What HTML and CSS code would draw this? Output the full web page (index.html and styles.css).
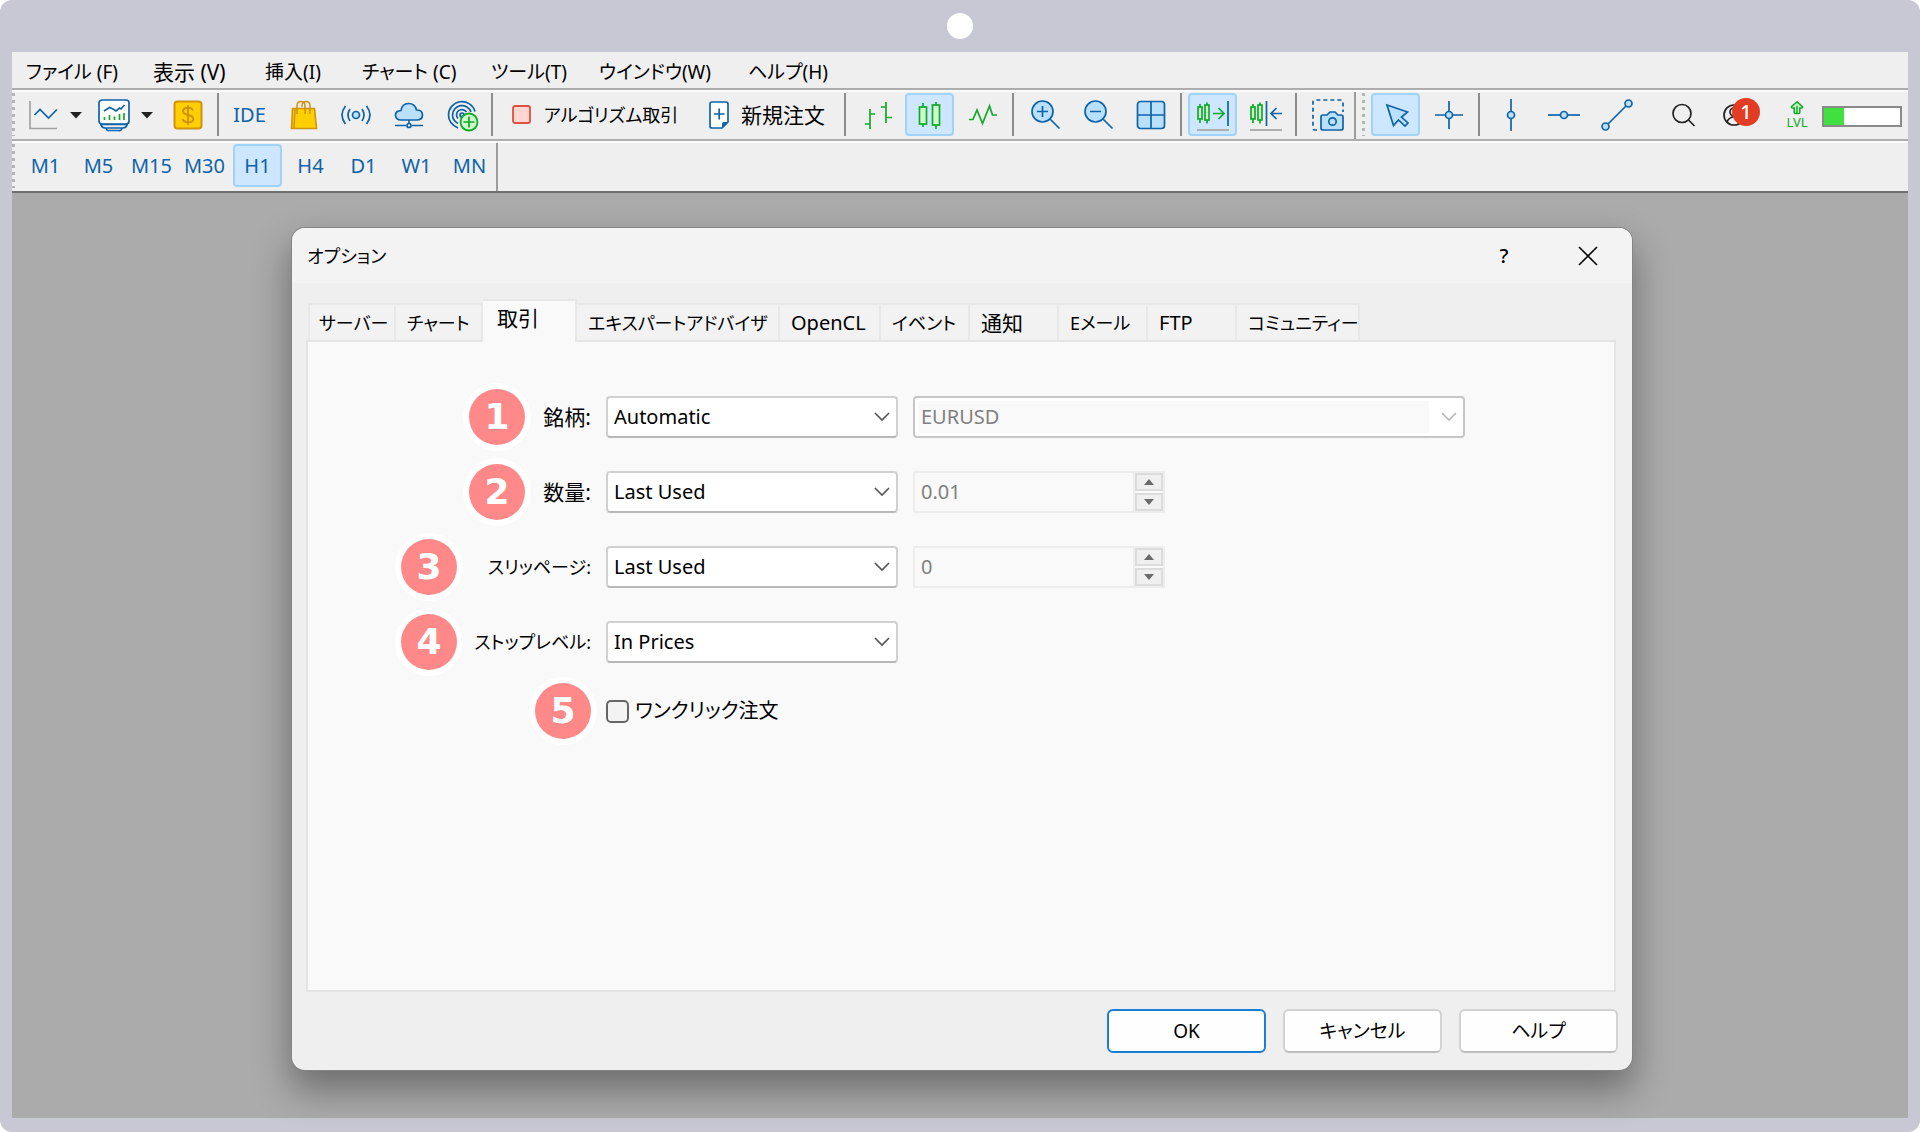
FILE: index.html
```html
<!DOCTYPE html>
<html lang="ja">
<head>
<meta charset="utf-8">
<meta name="viewport" content="width=device-width, initial-scale=1">
<title>オプション</title>
<link rel="stylesheet" href="styles.css">
</head>
<body>
<div class="device">
  <div class="camera-bar"><span class="camera"></span></div>
  <div class="app">
    <nav class="menubar" aria-label="メニュー">
      <button type="button">ファイル (F)</button>
      <button type="button" class="kanji">表示 (V)</button>
      <button type="button">挿入(I)</button>
      <button type="button">チャート (C)</button>
      <button type="button">ツール(T)</button>
      <button type="button">ウインドウ(W)</button>
      <button type="button">ヘルプ(H)</button>
    </nav>

    <div class="toolbar toolbar-main">
      <span class="grip"></span>
      <button type="button" class="tool tool-drop" aria-label="チャート種類">
        <svg class="icon" viewBox="0 0 32 32"><path class="axis" d="M3 2V29.500H30"/><path class="blue" d="M7.500 16 13 10.500 21.500 19 30 10.500"/></svg>
        <svg class="caret" viewBox="0 0 12 8"><path d="M0 1h12L6 7.500z"/></svg>
      </button>
      <button type="button" class="tool tool-drop" aria-label="プロファイル">
        <svg class="icon" viewBox="0 0 32 32"><rect class="blue white-fill" x="1" y="1" width="30" height="24" rx="3"/><path class="blue" d="M6 12 11.500 8.500 15 10l3 2L21.500 9 23 10 26.500 6"/><path class="green" stroke-width="2.400" d="M6.500 21v-3M11.500 21v-5M16.500 21v-3.500M21.500 21v-6M26 21v-7"/><path class="blue" d="M3 26q1 3 4 3h18q3 0 4-3M8 29.500q1 2.500 3 2h10q2 .5 3-2M2 25.500h28"/></svg>
        <svg class="caret" viewBox="0 0 12 8"><path d="M0 1h12L6 7.500z"/></svg>
      </button>
      <button type="button" class="tool" aria-label="気配値">
        <svg class="icon" viewBox="0 0 32 32"><rect x="2.500" y="2.500" width="27" height="27" rx="3" fill="#ffcf00" stroke="#cf9310" stroke-width="2"/><path d="M21 11.500C20.500 9.500 18.500 8.700 16 8.700c-2.800 0-5 1.300-5 3.600 0 5 10.300 2.400 10.300 7.400 0 2.400-2.300 3.600-5.200 3.600-2.800 0-5-1.100-5.400-3.300M16 6v20" fill="none" stroke="#cf9310" stroke-width="2"/></svg>
      </button>
      <span class="sep"></span>
      <button type="button" class="tool">IDE</button>
      <button type="button" class="tool" aria-label="マーケット">
        <svg class="icon" viewBox="0 0 32 32"><path d="M5.500 9.500h22l2 20h-25z" fill="#ffcf00" stroke="#cf9310" stroke-width="1.600"/><path d="M10 15V7q0-4.500 4-4.500T18 7v8M15 8V7q0-4.500 4-4.500T23 7v8M8 10 7 29" fill="none" stroke="#cf9310" stroke-width="1.500"/></svg>
      </button>
      <button type="button" class="tool" aria-label="シグナル">
        <svg class="icon" viewBox="0 0 32 32"><circle class="blue blue-fill" cx="16" cy="16" r="3.500"/><path class="blue" d="M10 10q-4 6 0 12M22 10q4 6 0 12M5.500 7q-7 9 0 18M26.500 7q7 9 0 18"/></svg>
      </button>
      <button type="button" class="tool" aria-label="クラウド">
        <svg class="icon" viewBox="0 0 32 32"><path class="blue blue-fill" d="M8 21q-5 0-5.500-4.500T8 11.500Q9 4.500 15.500 4.500T23.500 11q6 0 6 5t-6 5z"/><path class="blue" d="M16 21v4M2 26.500h11M19 26.500h11"/><circle class="blue" cx="16" cy="26.500" r="2"/></svg>
      </button>
      <button type="button" class="tool" aria-label="VPS">
        <svg class="icon" viewBox="0 0 32 32"><path class="blue" d="M12 29Q2.500 24.500 2.500 16A13.500 13.500 0 0 1 29 12.500M12 24.500Q6.500 21.500 6.500 16A9.500 9.500 0 0 1 25 13M12 19.500Q10.500 18 10.500 15.500A5.500 5.500 0 0 1 20.500 13"/><circle class="blue blue-fill" cx="16" cy="16" r="2"/><circle cx="23" cy="23" r="8.500" fill="#ccffcc" stroke="#12a82a" stroke-width="1.800"/><path class="green" d="M17.500 23h11M23 17.500v11"/></svg>
      </button>
      <span class="sep"></span>
      <button type="button" class="tool tool-text tool-algo">
        <svg class="icon-small" viewBox="0 0 20 28"><rect x="1" y="5" width="17" height="17" rx="2" fill="#ffd6d2" stroke="#e0503f" stroke-width="1.800"/></svg>
        アルゴリズム取引
      </button>
      <button type="button" class="tool tool-text tool-order">
        <svg class="icon-small" viewBox="0 0 20 28"><path class="blue white-fill" d="M3 1h14q2 0 2 2v18l-6 6H3q-2 0-2-2V3q0-2 2-2z"/><path d="M13 27v-4q0-2 2-2h4z" fill="#0f63a8"/><path class="blue" d="M5 13h10.500M10.200 7.500v11"/></svg>
        新規注文
      </button>
      <span class="sep"></span>
      <button type="button" class="tool" aria-label="バーチャート">
        <svg class="icon" viewBox="0 0 32 32"><path class="green" d="M9 10v20M4 25h5M9 15h5M25 3v21M20 8h5M25 18.500h6"/></svg>
      </button>
      <button type="button" class="tool tool-on" aria-label="ローソク足">
        <svg class="icon" viewBox="0 0 32 32"><path class="green" d="M9 4v24M22 3v27"/><rect class="green green-fill" x="5.500" y="8" width="7" height="17"/><rect class="green green-fill" x="18.500" y="6" width="7" height="20"/></svg>
      </button>
      <button type="button" class="tool" aria-label="ラインチャート">
        <svg class="icon" viewBox="0 0 32 32"><path class="green" d="M2 20.500h4L10 11l5.500 13.500L22.500 7l3 9H30"/></svg>
      </button>
      <span class="sep"></span>
      <button type="button" class="tool" aria-label="ズームイン">
        <svg class="icon" viewBox="0 0 32 32"><circle class="blue blue-fill" cx="13.500" cy="12.500" r="10.500"/><path class="blue" d="M21 20l9.500 9.500M8 12.500h11M13.500 7v11"/></svg>
      </button>
      <button type="button" class="tool" aria-label="ズームアウト">
        <svg class="icon" viewBox="0 0 32 32"><circle class="blue blue-fill" cx="13.500" cy="12.500" r="10.500"/><path class="blue" d="M21 20l9.500 9.500M8 12.500h11"/></svg>
      </button>
      <button type="button" class="tool" aria-label="タイル表示">
        <svg class="icon" viewBox="0 0 32 32"><rect class="blue blue-fill" x="2.500" y="2.500" width="27" height="27" rx="3"/><path class="blue" d="M2.500 16h27M16 2.500v27"/></svg>
      </button>
      <span class="sep"></span>
      <button type="button" class="tool tool-on" aria-label="自動スクロール">
        <svg class="icon" viewBox="0 0 32 32"><path class="green" d="M3 5v19M10 3.500v21M16 14.500h11M21.500 9l5.500 5.500-5.500 5.500"/><rect class="green green-fill" x="1" y="8" width="4" height="12"/><rect class="green green-fill" x="8" y="6" width="4" height="15"/><path class="blue" d="M31 2v25"/><path class="axis" d="M0 31h32"/></svg>
      </button>
      <button type="button" class="tool" aria-label="チャートシフト">
        <svg class="icon" viewBox="0 0 32 32"><path class="green" d="M3 5v19M10 3.500v21"/><rect class="green green-fill" x="1" y="8" width="4" height="12"/><rect class="green green-fill" x="8" y="6" width="4" height="15"/><path class="blue" d="M16.500 2v25M32 14.500H21M26.500 9 21 14.500l5.500 5.500"/><path class="axis" d="M0 31h32"/></svg>
      </button>
      <span class="sep"></span>
      <button type="button" class="tool" aria-label="スクリーンショット">
        <svg class="icon" viewBox="0 0 32 32"><path class="blue" stroke-dasharray="4 3" d="M5 31H3q-2 0-2-2V3q0-2 2-2h26q2 0 2 2v10"/><path class="blue blue-fill" d="M11 16h4l3-3h5l3 3h3q2 0 2 2v11q0 2-2 2H11q-2 0-2-2V18q0-2 2-2z"/><circle class="blue" cx="20.500" cy="22.500" r="3.700"/></svg>
      </button>
      <span class="band-end"></span>
      <span class="grip"></span>
      <button type="button" class="tool tool-on" aria-label="カーソル">
        <svg class="icon" viewBox="0 0 32 32"><path class="blue blue-fill" d="M7 6l20.500 7-6 5 6.500 6-3 3-6.500-6-5 5.500z"/></svg>
      </button>
      <button type="button" class="tool" aria-label="十字カーソル">
        <svg class="icon" viewBox="0 0 32 32"><path class="blue" d="M2 16h28M16 2v28"/><circle class="blue blue-fill" cx="16" cy="16" r="3.500"/></svg>
      </button>
      <span class="sep"></span>
      <button type="button" class="tool" aria-label="垂直線">
        <svg class="icon" viewBox="0 0 32 32"><path class="blue" d="M16 0v32"/><circle class="blue blue-fill" cx="16" cy="16" r="3.500"/></svg>
      </button>
      <button type="button" class="tool" aria-label="水平線">
        <svg class="icon" viewBox="0 0 32 32"><path class="blue" d="M0 16h32"/><circle class="blue blue-fill" cx="16" cy="16" r="3.500"/></svg>
      </button>
      <button type="button" class="tool" aria-label="トレンドライン">
        <svg class="icon" viewBox="0 0 32 32"><path class="blue" d="M6 26 26 6"/><circle class="blue blue-fill" cx="4.500" cy="27.500" r="3.500"/><circle class="blue blue-fill" cx="27.500" cy="4.500" r="3.500"/></svg>
      </button>
      <div class="status">
        <button type="button" class="tool" aria-label="検索">
          <svg class="icon" viewBox="0 0 32 32"><circle class="dark" cx="15" cy="14.500" r="9"/><path class="dark" d="M21.500 21l6 6"/></svg>
        </button>
        <button type="button" class="account" aria-label="通知 1 件">
          <svg class="icon" viewBox="0 0 32 32"><circle class="dark" cx="14" cy="16" r="10"/><circle class="dark" cx="14" cy="13" r="4"/><path class="dark" d="M7 23q2-5 7-5t7 5"/></svg>
          <span class="count">1</span>
        </button>
        <span class="level">
          <svg class="level-icon" viewBox="0 0 16 15"><path d="M8 1l6 5q.5 2-3 1.500v5q0 1-1.500 1h-3q-1.500 0-1.500-1v-5Q1.500 8 2 6zM8 5v8" fill="#ccffcc" stroke="#12a82a" stroke-width="1.600"/></svg>
          <span>LVL</span>
        </span>
        <span class="meter"><span class="meter-fill" style="width:26%"></span></span>
      </div>
    </div>

    <div class="toolbar toolbar-periods">
      <span class="grip"></span>
      <button type="button" class="tool">M1</button>
      <button type="button" class="tool">M5</button>
      <button type="button" class="tool">M15</button>
      <button type="button" class="tool">M30</button>
      <button type="button" class="tool tool-on">H1</button>
      <button type="button" class="tool">H4</button>
      <button type="button" class="tool">D1</button>
      <button type="button" class="tool">W1</button>
      <button type="button" class="tool">MN</button>
      <span class="band-end"></span>
    </div>

    <main class="workspace">
      <section class="dialog" role="dialog" aria-labelledby="dialog-title">
        <header class="dialog-head">
          <h1 id="dialog-title">オプション</h1>
          <button type="button" class="head-button" aria-label="ヘルプを表示">?</button>
          <button type="button" class="head-button head-close" aria-label="閉じる"><svg class="close" viewBox="0 0 20 20"><path d="M1 1l18 18M19 1 1 19"/></svg></button>
        </header>

        <div class="tabs" role="tablist">
          <button type="button" role="tab" class="kana">サーバー</button>
          <button type="button" role="tab" class="kana">チャート</button>
          <button type="button" role="tab" class="kanji active" aria-selected="true">取引</button>
          <button type="button" role="tab" class="kana">エキスパートアドバイザ</button>
          <button type="button" role="tab">OpenCL</button>
          <button type="button" role="tab" class="kana">イベント</button>
          <button type="button" role="tab" class="kanji">通知</button>
          <button type="button" role="tab" class="kana">Eメール</button>
          <button type="button" role="tab">FTP</button>
          <button type="button" role="tab" class="kana">コミュニティー</button>
        </div>

        <form class="panel" id="options">
          <div class="row">
            <div class="caption"><span class="step">1</span><label for="symbol" class="short kanji">銘柄:</label></div>
            <div class="select"><select id="symbol"><option>Automatic</option></select><svg viewBox="0 0 16 10"><path d="M1 1l7 7 7-7"/></svg></div>
            <div class="select select-off"><select aria-label="銘柄の値" disabled><option>EURUSD</option></select><svg viewBox="0 0 16 10"><path d="M1 1l7 7 7-7"/></svg></div>
          </div>
          <div class="row">
            <div class="caption"><span class="step">2</span><label for="volume" class="short kanji">数量:</label></div>
            <div class="select"><select id="volume"><option>Last Used</option></select><svg viewBox="0 0 16 10"><path d="M1 1l7 7 7-7"/></svg></div>
            <div class="spinner">
              <input type="text" value="0.01" aria-label="数量の値" disabled>
              <div class="steps"><button type="button" aria-label="増やす" disabled><svg viewBox="0 0 10 6"><path d="M0 6h10L5 0z"/></svg></button><button type="button" aria-label="減らす" disabled><svg viewBox="0 0 10 6"><path d="M0 0h10L5 6z"/></svg></button></div>
            </div>
          </div>
          <div class="row">
            <div class="caption"><span class="step">3</span><label for="slippage" class="long kana">スリッページ:</label></div>
            <div class="select"><select id="slippage"><option>Last Used</option></select><svg viewBox="0 0 16 10"><path d="M1 1l7 7 7-7"/></svg></div>
            <div class="spinner">
              <input type="text" value="0" aria-label="スリッページの値" disabled>
              <div class="steps"><button type="button" aria-label="増やす" disabled><svg viewBox="0 0 10 6"><path d="M0 6h10L5 0z"/></svg></button><button type="button" aria-label="減らす" disabled><svg viewBox="0 0 10 6"><path d="M0 0h10L5 6z"/></svg></button></div>
            </div>
          </div>
          <div class="row">
            <div class="caption"><span class="step">4</span><label for="stops" class="long kana">ストップレベル:</label></div>
            <div class="select"><select id="stops"><option>In Prices</option></select><svg viewBox="0 0 16 10"><path d="M1 1l7 7 7-7"/></svg></div>
          </div>
          <div class="row row-check">
            <div class="caption"><span class="step">5</span></div>
            <label class="check"><input type="checkbox">ワンクリック注文</label>
          </div>
        </form>

        <footer class="dialog-foot">
          <button type="submit" form="options" class="primary">OK</button>
          <button type="button">キャンセル</button>
          <button type="button">ヘルプ</button>
        </footer>
      </section>
    </main>
  </div>
</div>
</body>
</html>
```
FILE: styles.css
```css
:root {
  --frame: #c8c7d4;
  --face: #efefef;
  --blue: #0f63a8;
  --green: #12a82a;
  --line: #e4e4e4;
}

* { box-sizing: border-box; }

body {
  margin: 0;
  background: #fff;
  color: #000;
  font: 20px/28px "Noto Sans", "Noto Sans CJK JP", sans-serif;
  font-feature-settings: "palt";
}

button, input, select {
  margin: 0;
  padding: 0;
  border: 0;
  background: none;
  color: inherit;
  font: inherit;
  font-feature-settings: inherit;
}

.device {
  display: flex;
  flex-direction: column;
  min-height: 100vh;
  padding: 0 12px 14px;
  border-radius: 12px;
  background: var(--frame);
}

.camera-bar {
  display: flex;
  align-items: center;
  justify-content: center;
  height: 52px;
}

.camera {
  width: 26px;
  height: 26px;
  border-radius: 50%;
  background: #fff;
}

.app {
  display: flex;
  flex: 1;
  flex-direction: column;
  background: var(--face);
}

/* Menu */
.menubar {
  display: grid;
  grid-template-columns: 127px 112px 97px 129px 108px 149px auto;
  height: 38px;
  padding: 6px 14px 2px;
  border-bottom: 2px solid #adadad;
}

.menubar button {
  font-size: 19px;
  text-align: left;
  white-space: nowrap;
}

/* Kana set narrower and kanji set wider than the Latin text */
.kana { font-size: 18px; }
.kanji, .menubar .kanji { font-size: 21px; }

/* Toolbars */
.toolbar {
  display: flex;
  gap: 4px;
  height: 51px;
  padding: 1px 0 3px;
  border-top: 2px solid #fafafa;
  color: var(--blue);
}

.toolbar-main { border-bottom: 2px solid #adadad; }

.toolbar-periods {
  height: 52px;
  border-bottom: 2px solid #6f6f6f;
}

.grip {
  width: 5px;
  background: repeating-linear-gradient(#b5b5b5 0 3px, transparent 3px 7px) no-repeat left / 3px 100%;
}

.tool {
  display: flex;
  flex: none;
  align-items: center;
  justify-content: center;
  width: 49px;
  height: 43px;
  border: 2px solid transparent;
  border-radius: 4px;
}

.tool-on {
  border-color: #a0d3fb;
  background: #cce7ff;
}

.tool-drop {
  justify-content: flex-start;
  gap: 11px;
  width: 67px;
  padding-left: 4px;
}

.tool-text {
  justify-content: flex-start;
  gap: 12px;
  padding-left: 11px;
  color: #000;
  white-space: nowrap;
}

.tool-algo {
  width: 193px;
  font-size: 18px;
}

.tool-order {
  width: 143px;
  font-size: 21px;
}

.sep {
  flex: none;
  width: 2px;
  margin: 0 2px 0 1px;
  background: #8c8c8c;
}

.band-end {
  flex: none;
  width: 2px;
  margin: -1px 2px -3px -2px;
  background: #9c9c9c;
}

.icon {
  flex: none;
  width: 32px;
  height: 32px;
  overflow: visible;
}

.icon-small {
  flex: none;
  width: 20px;
  height: 28px;
}

.caret {
  width: 12px;
  height: 8px;
  fill: #222;
}

.blue, .green, .dark, .axis {
  fill: none;
  stroke: var(--blue);
  stroke-width: 1.700;
}

.green { stroke: var(--green); }
.dark { stroke: #222; }
.axis { stroke: #a3a3a3; }
.blue-fill { fill: #b9e1ff; }
.green-fill { fill: #ccffcc; }
.white-fill { fill: #fff; }

.status {
  display: flex;
  align-items: center;
  margin-left: auto;
  padding-right: 6px;
}

.account {
  position: relative;
  display: flex;
  width: 71px;
  padding-left: 13px;
}

.count {
  position: absolute;
  top: -1px;
  left: 25px;
  width: 28px;
  height: 28px;
  border-radius: 50%;
  background: #e23d24;
  color: #fff;
  font-weight: 500;
}

.level {
  display: flex;
  flex-direction: column;
  align-items: center;
  width: 38px;
  color: var(--green);
  font-size: 13px;
  line-height: 14px;
}

.level-icon {
  width: 16px;
  height: 14px;
}

.meter {
  width: 80px;
  height: 21px;
  margin: 4px 0 0 6px;
  border: 2px solid #8a8a8a;
  background: #fff;
}

.meter-fill {
  display: block;
  height: 100%;
  background: #40e040;
}

/* Workspace and dialog */
.workspace {
  flex: 1;
  padding: 35px 0 48px 4px;
  background: #ababab;
}

.dialog {
  display: flex;
  flex-direction: column;
  width: min(1340px, 100%);
  margin: 0 auto;
  border-radius: 13px;
  background: var(--face);
  box-shadow: 0 0 0 1px #858585, 0 18px 36px 2px rgba(0, 0, 0, .36);
}

.dialog-head {
  display: flex;
  align-items: center;
  height: 55px;
  padding: 0 4px 0 15px;
  border-radius: 13px 13px 0 0;
  background: #f3f3f3;
}

.dialog-head h1 {
  flex: 1;
  margin: 0;
  font-size: 18px;
  font-weight: 400;
}

.head-button {
  display: flex;
  align-items: center;
  justify-content: center;
  width: 88px;
  height: 44px;
  font-weight: 500;
}

.head-close { width: 80px; }

.close {
  width: 20px;
  height: 20px;
  fill: none;
  stroke: #000;
  stroke-width: 1.600;
}

.tabs {
  display: grid;
  grid-template-columns: 88px 87px 94px 203px 101px 89px 89px 89px 89px 123px;
  align-items: end;
  margin: 16px 17px -2px 16px;
}

.tabs button {
  height: 39px;
  padding-left: 11px;
  border: 2px solid #e8e8e8;
  border-left-width: 0;
  background: #f2f2f2;
  text-align: left;
  white-space: nowrap;
}

.tabs button:first-child {
  padding-left: 9px;
  border-left-width: 2px;
}

.tabs .active {
  z-index: 1;
  height: 43px;
  padding: 0 0 7px 14px;
  border-bottom: 0;
  background: #f9f9f9;
}

.panel {
  display: flex;
  flex-direction: column;
  gap: 33px;
  min-height: 652px;
  margin: 0 16px 0 14px;
  padding: 54px 0 0;
  border: 2px solid var(--line);
  background: #f9f9f9;
}

.row {
  display: grid;
  grid-template: 100% / 283px 292px 552px;
  column-gap: 15px;
  align-items: center;
  height: 42px;
}

.row-check { height: 30px; }

.caption {
  display: flex;
  align-items: center;
  justify-content: flex-end;
  height: 100%;
}

.caption label {
  text-align: right;
  white-space: nowrap;
}

.short { width: 66px; }
.long { width: 134px; }

.step {
  width: 56px;
  height: 56px;
  border-radius: 50%;
  background: #ff8989;
  box-shadow: 0 0 0 6px #fff;
  color: #fff;
  font: bold 36px/56px "DejaVu Sans", sans-serif;
  text-align: center;
}

.select {
  display: grid;
  align-items: center;
  height: 42px;
}

.select > * { grid-area: 1 / 1; }

.select select {
  width: 100%;
  height: 42px;
  padding: 0 36px 0 6px;
  border: 2px solid #d0d0d0;
  border-bottom-color: #b8b8b8;
  border-radius: 4px;
  background: #fff;
  appearance: none;
}

.select svg {
  justify-self: end;
  width: 16px;
  height: 10px;
  margin-right: 8px;
  fill: none;
  stroke: #555;
  stroke-width: 1.600;
  pointer-events: none;
}

.select-off select {
  border-color: #c6c6c6;
  background: #fff linear-gradient(#f9f9f9, #f9f9f9) no-repeat 3px 3px / 511px 32px;
  color: #808080;
  opacity: 1;
}

.select-off svg { stroke: #b8b8b8; }

.spinner {
  display: flex;
  width: 252px;
  height: 42px;
  border: 2px solid #ededed;
}

.spinner input {
  flex: 1;
  min-width: 0;
  padding-left: 6px;
  border-right: 2px solid #ededed;
  color: #808080;
}

.steps {
  display: flex;
  flex-direction: column;
  gap: 2px;
  width: 28px;
}

.steps button {
  display: flex;
  flex: 1;
  align-items: center;
  justify-content: center;
  border: 2px solid #dcdcdc;
  background: #f0f0f0;
}

.steps svg {
  width: 10px;
  height: 6px;
  fill: #6a6a6a;
}

.check {
  display: flex;
  align-items: center;
  gap: 6px;
  white-space: nowrap;
}

.check input {
  width: 23px;
  height: 23px;
  border: 2px solid #666;
  border-radius: 5px;
  background: #f3f3f3;
  appearance: none;
}

.dialog-foot {
  display: flex;
  justify-content: flex-end;
  gap: 17px;
  padding: 17px 14px;
}

.dialog-foot button {
  width: 159px;
  height: 44px;
  border: 2px solid #d2d2d2;
  border-bottom-color: #bcbcbc;
  border-radius: 6px;
  background: #fefefe;
  font-size: 19px;
}

.dialog-foot .primary { border-color: #1a7fd4; }
```
